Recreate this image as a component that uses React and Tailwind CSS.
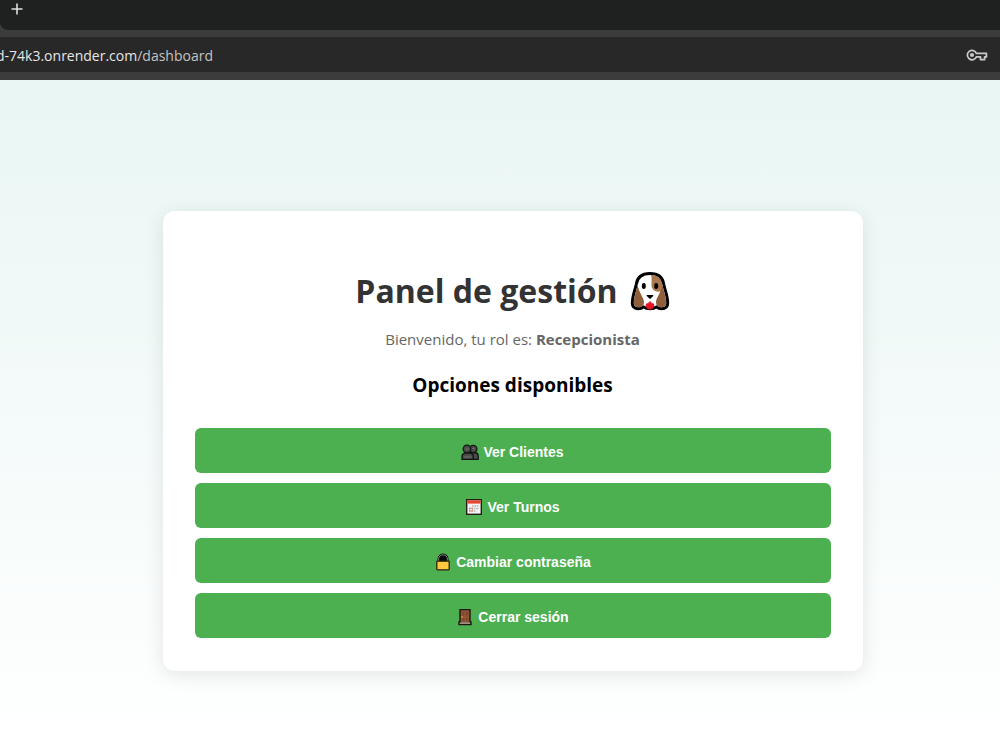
import React from "react";

function DogIcon() {
  return (
    <svg viewBox="0 0 40 40" className="w-10 h-10" role="img" aria-label="Perro">
      <path
        d="M20 2.5C12 2.5 7.2 6.5 6.2 13.5C5 19.5 2.3 25 2.3 32C2.3 36 5 37.8 8.5 37.8C10.5 37.8 12.2 37 13.5 35.8C15 37 17.5 37.8 20 37.8C22.5 37.8 25 37 26.5 35.8C27.8 37 29.5 37.8 31.5 37.8C35 37.8 37.7 36 37.7 32C37.7 25 35 19.5 33.8 13.5C32.8 6.5 28 2.5 20 2.5Z"
        fill="#fff"
        stroke="#000"
        strokeWidth="3"
        strokeLinejoin="round"
      />
      <path d="M21 4C28 4 31.6 8 32.4 14L31.5 20C26 22 21.5 19 21.5 14C21.5 11 22 7 21 4Z" fill="#a9784f" />
      <path d="M7.6 14C6.5 19.5 3.8 26 3.8 32C3.8 35 6 36.3 8.5 36.3C12 36.3 14 34.5 14 31C14 27 9 22 7.6 14Z" fill="#8f5e3a" />
      <path d="M32.4 14C33.5 19.5 36.2 26 36.2 32C36.2 35 34 36.3 31.5 36.3C28 36.3 26 34.5 26 31C26 27 31 22 32.4 14Z" fill="#8f5e3a" />
      <path d="M16.3 33C17.8 32.8 19.2 31.8 20 30.5C20.8 31.8 22.2 32.8 23.7 33C24.3 36 22.6 38 20 38C17.4 38 15.7 36 16.3 33Z" fill="#e81224" stroke="#e81224" strokeLinejoin="round" />
      <ellipse cx="13.8" cy="15" rx="2" ry="3" fill="#000" />
      <ellipse cx="26.2" cy="15" rx="2" ry="3" fill="#000" />
      <path d="M17.2 24.5H22.8L20 27.2Z" fill="#000" stroke="#000" strokeWidth="1.2" strokeLinejoin="round" />
    </svg>
  );
}

function ClientsIcon() {
  return (
    <svg viewBox="0 0 18 18" className="w-[18px] h-[18px]" aria-hidden="true">
      <g fill="#4b4b4b" stroke="#101510" strokeWidth="1.3">
        <path d="M7 16V13C7 10.5 9 9.5 12.5 9.5C16 9.5 17.2 10.5 17.2 13V16.3H7Z" />
        <circle cx="12.2" cy="6" r="3.7" />
        <path d="M1 16.3V13C1 10.8 2.8 9.8 6.5 9.8C10.5 9.8 12.3 10.8 12.3 13V16.3Z" />
        <circle cx="6" cy="6" r="3.8" />
      </g>
      <path d="M4.5 6H7.5M11.5 5.5H13.5M3 14H10.5" stroke="#747474" strokeWidth="1.2" />
    </svg>
  );
}

function CalendarIcon() {
  return (
    <svg viewBox="0 0 18 18" className="w-[18px] h-[18px]" aria-hidden="true">
      <rect x="1.7" y="1.7" width="14.6" height="14.6" fill="#f4f4f4" stroke="#251d18" strokeWidth="1.4" />
      <path d="M2.4 2.4H15.6V5.6H2.4Z" fill="#e8452c" />
      <path d="M7 8H14M4 10.5H14M4 13H11" stroke="#b4b4b4" strokeWidth="1.4" strokeDasharray="1.6 0.8" />
      <rect x="4.6" y="10.2" width="2.8" height="2.8" fill="none" stroke="#d98f84" strokeWidth="0.8" />
    </svg>
  );
}

function LockIcon() {
  return (
    <svg viewBox="0 0 18 18" className="w-[18px] h-[18px]" aria-hidden="true">
      <path d="M4 9V6C4 3 6 1 9 1C12 1 14 3 14 6V9Z" fill="#080808" stroke="#080808" />
      <path d="M4.6 8V6C4.6 3.5 6.6 1.8 9 1.8C11.4 1.8 13.4 3.5 13.4 6V8" fill="none" stroke="#8c9090" strokeWidth="0.9" />
      <rect x="2.8" y="8.2" width="12.4" height="8.6" rx="0.8" fill="#ffc83d" stroke="#2b230c" strokeWidth="1.3" />
    </svg>
  );
}

function DoorIcon() {
  return (
    <svg viewBox="0 0 18 18" className="w-[18px] h-[18px]" aria-hidden="true">
      <path d="M4 1.6H14V14H15V16.5H3V14H4Z" fill="#8e5534" stroke="#20180f" strokeWidth="1.4" />
      <path d="M6.5 4H8.3V7.5H6.5ZM10 4H11.8V7.5H10ZM6.5 10H8.3V13H6.5ZM10 10H11.8V13H10Z" fill="#7c4728" />
      <path d="M3.8 15.2H14.2" stroke="#9b9b93" strokeWidth="1.4" />
      <circle cx="6" cy="9" r="0.8" fill="#f6b73c" />
    </svg>
  );
}

const options = [
  { label: "Ver Clientes", Icon: ClientsIcon },
  { label: "Ver Turnos", Icon: CalendarIcon },
  { label: "Cambiar contraseña", Icon: LockIcon },
  { label: "Cerrar sesión", Icon: DoorIcon },
];

function BrowserBar() {
  return (
    <header className="bg-[#3c3c3c] pb-2">
      <div className="h-[30px] bg-[#1f2120] rounded-bl-lg px-2">
        <button type="button" aria-label="Nueva pestaña" className="block p-0.5 text-[#dedede]">
          <svg viewBox="0 0 14 14" className="w-3.5 h-3.5">
            <path d="M7 1.5V12.5M1.5 7H12.5" stroke="currentColor" strokeWidth="1.6" />
          </svg>
        </button>
      </div>
      <div className="mt-[7px] h-[35px] bg-[#282828] flex items-center justify-between pr-3">
        <p className="-ml-1 pt-0.5 text-sm text-[#e6e6e6] whitespace-nowrap font-['Open_Sans',sans-serif]">
          d-74k3.onrender.com<span className="text-[#c3c3c3]">/dashboard</span>
        </p>
        <button type="button" aria-label="Contraseñas" className="text-[#c8c8c8]">
          <svg viewBox="0 0 22 14" className="w-[22px] h-3.5" fill="none" stroke="currentColor" strokeWidth="1.8">
            <path d="M10.4 5.3A4.7 4.7 0 1 0 10.4 8.9H14.5V11.6H18.6V8.9H20.4V5.3Z" strokeLinejoin="round" />
            <circle cx="6" cy="7" r="2.1" fill="currentColor" stroke="none" />
          </svg>
        </button>
      </div>
    </header>
  );
}

export default function App() {
  return (
    <div className="min-h-screen flex flex-col">
      <BrowserBar />
      <main className="flex-1 bg-linear-to-b from-[#e9f6f4] to-white pt-[131px] pb-[79px] pl-[25px] font-['Open_Sans','Noto_Sans',sans-serif]">
        <section className="max-w-[700px] mx-auto bg-white rounded-xl shadow-[0_4px_20px_rgba(0,0,0,0.1)] px-8 pt-14 pb-[33px] text-center">
          <h1 className="flex items-center justify-center gap-3 text-[32px] leading-12 font-bold text-[#333]">
            Panel de gestión <DogIcon />
          </h1>
          <p className="mt-3 text-[15px] leading-6 text-[#666]">
            Bienvenido, tu rol es: <strong>Recepcionista</strong>
          </p>
          <h2 className="mt-5 text-[19px] leading-7 font-bold text-black">Opciones disponibles</h2>
          <div className="mt-[29px] flex flex-col gap-[10px]">
            {options.map(({ label, Icon }) => (
              <button
                key={label}
                type="button"
                className="h-[45px] w-full flex items-center justify-center gap-1 pt-0.5 rounded-md bg-[#4caf50] text-white text-sm font-bold font-['Liberation_Sans',Arial,sans-serif]"
              >
                <Icon />
                {label}
              </button>
            ))}
          </div>
        </section>
      </main>
    </div>
  );
}
